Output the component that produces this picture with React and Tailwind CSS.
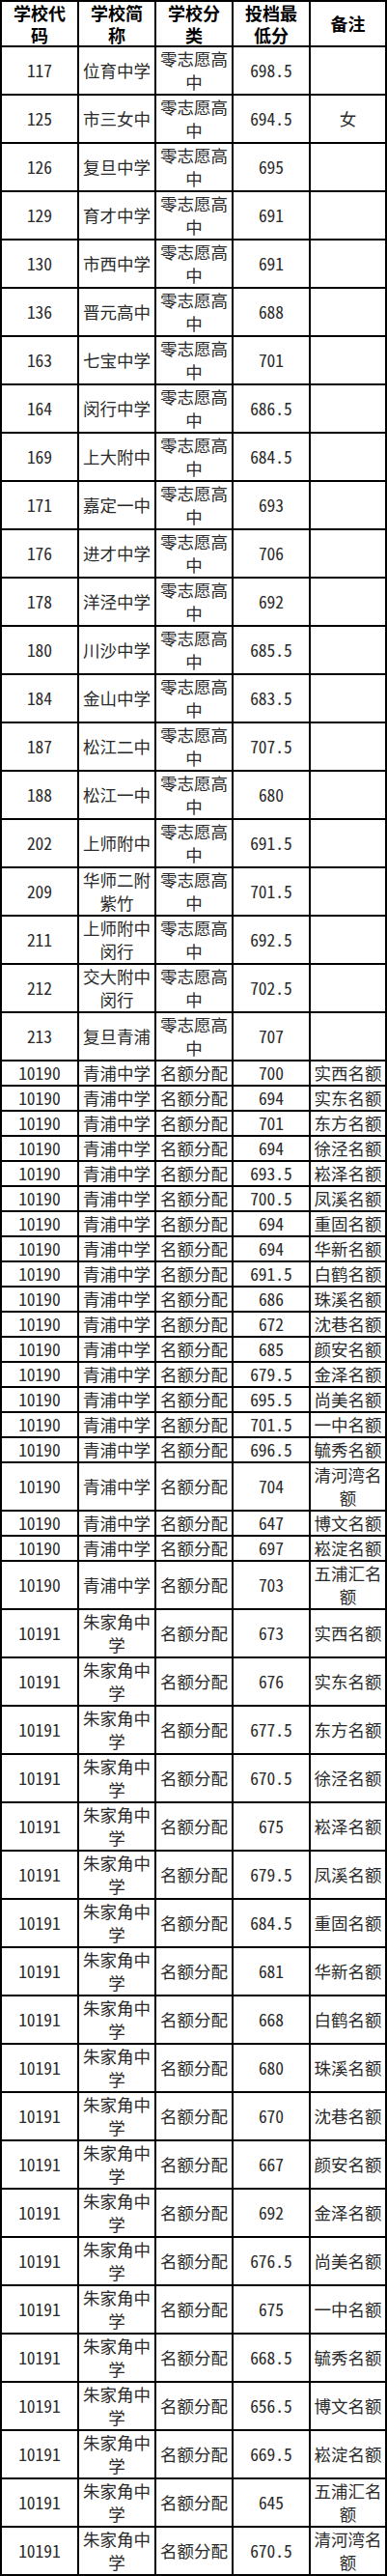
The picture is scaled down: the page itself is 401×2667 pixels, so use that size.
import React from "react";

const zero = [
  ["117", "位育中学", "698.5", ""],
  ["125", "市三女中", "694.5", "女"],
  ["126", "复旦中学", "695", ""],
  ["129", "育才中学", "691", ""],
  ["130", "市西中学", "691", ""],
  ["136", "晋元高中", "688", ""],
  ["163", "七宝中学", "701", ""],
  ["164", "闵行中学", "686.5", ""],
  ["169", "上大附中", "684.5", ""],
  ["171", "嘉定一中", "693", ""],
  ["176", "进才中学", "706", ""],
  ["178", "洋泾中学", "692", ""],
  ["180", "川沙中学", "685.5", ""],
  ["184", "金山中学", "683.5", ""],
  ["187", "松江二中", "707.5", ""],
  ["188", "松江一中", "680", ""],
  ["202", "上师附中", "691.5", ""],
  ["209", "华师二附紫竹", "701.5", ""],
  ["211", "上师附中闵行", "692.5", ""],
  ["212", "交大附中闵行", "702.5", ""],
  ["213", "复旦青浦", "707", ""],
];

const qp = [
  ["700", "实西名额"],
  ["694", "实东名额"],
  ["701", "东方名额"],
  ["694", "徐泾名额"],
  ["693.5", "崧泽名额"],
  ["700.5", "凤溪名额"],
  ["694", "重固名额"],
  ["694", "华新名额"],
  ["691.5", "白鹤名额"],
  ["686", "珠溪名额"],
  ["672", "沈巷名额"],
  ["685", "颜安名额"],
  ["679.5", "金泽名额"],
  ["695.5", "尚美名额"],
  ["701.5", "一中名额"],
  ["696.5", "毓秀名额"],
  ["704", "清河湾名额"],
  ["647", "博文名额"],
  ["697", "崧淀名额"],
  ["703", "五浦汇名额"],
];

const zjj = [
  ["673", "实西名额"],
  ["676", "实东名额"],
  ["677.5", "东方名额"],
  ["670.5", "徐泾名额"],
  ["675", "崧泽名额"],
  ["679.5", "凤溪名额"],
  ["684.5", "重固名额"],
  ["681", "华新名额"],
  ["668", "白鹤名额"],
  ["680", "珠溪名额"],
  ["670", "沈巷名额"],
  ["667", "颜安名额"],
  ["692", "金泽名额"],
  ["676.5", "尚美名额"],
  ["675", "一中名额"],
  ["668.5", "毓秀名额"],
  ["656.5", "博文名额"],
  ["669.5", "崧淀名额"],
  ["645", "五浦汇名额"],
  ["670.5", "清河湾名额"],
];

const rows = [
  ...zero.map(([c, n, s, r]) => ({ cells: [c, n, "零志愿高中", s, r], tall: true })),
  ...qp.map(([s, r]) => ({
    cells: ["10190", "青浦中学", "名额分配", s, r],
    tall: r.length > 4,
  })),
  ...zjj.map(([s, r]) => ({
    cells: ["10191", "朱家角中学", "名额分配", s, r],
    tall: true,
  })),
];

const cell =
  "border-l-2 border-t-2 border-black flex items-center justify-center text-center overflow-hidden break-all";

function Header() {
  const heads = [
    ["学校代", "码"],
    ["学校简", "称"],
    ["学校分", "类"],
    ["投档最", "低分"],
    ["备注"],
  ];
  return (
    <div className="grid grid-cols-[80px_80px_80px_80px_79px] h-[47px]">
      {heads.map((h, i) => (
        <div
          key={i}
          className={cell + " font-bold text-black text-[18px] leading-[23px] font-['Noto_Sans_CJK_SC',sans-serif]"}
        >
          <div>
            {h.map((l, j) => (
              <div key={j}>{l}</div>
            ))}
          </div>
        </div>
      ))}
    </div>
  );
}

export default function App() {
  return (
    <div
      lang="zh-CN"
      className="w-[401px] bg-white border-r-2 border-b-2 border-black text-[#2a2a2a] text-[17.5px] leading-[24px] font-['Noto_Sans_Mono_CJK_SC','Noto_Sans_CJK_SC',monospace]"
    >
      <Header />
      {rows.map((row, i) => (
        <div
          key={i}
          className={
            "grid grid-cols-[80px_80px_80px_80px_79px] " +
            (row.tall ? "h-[50px]" : "h-[26px]")
          }
        >
          {row.cells.map((t, j) => (
            <div key={j} className={cell}>
              <span>{t}</span>
            </div>
          ))}
        </div>
      ))}
    </div>
  );
}
